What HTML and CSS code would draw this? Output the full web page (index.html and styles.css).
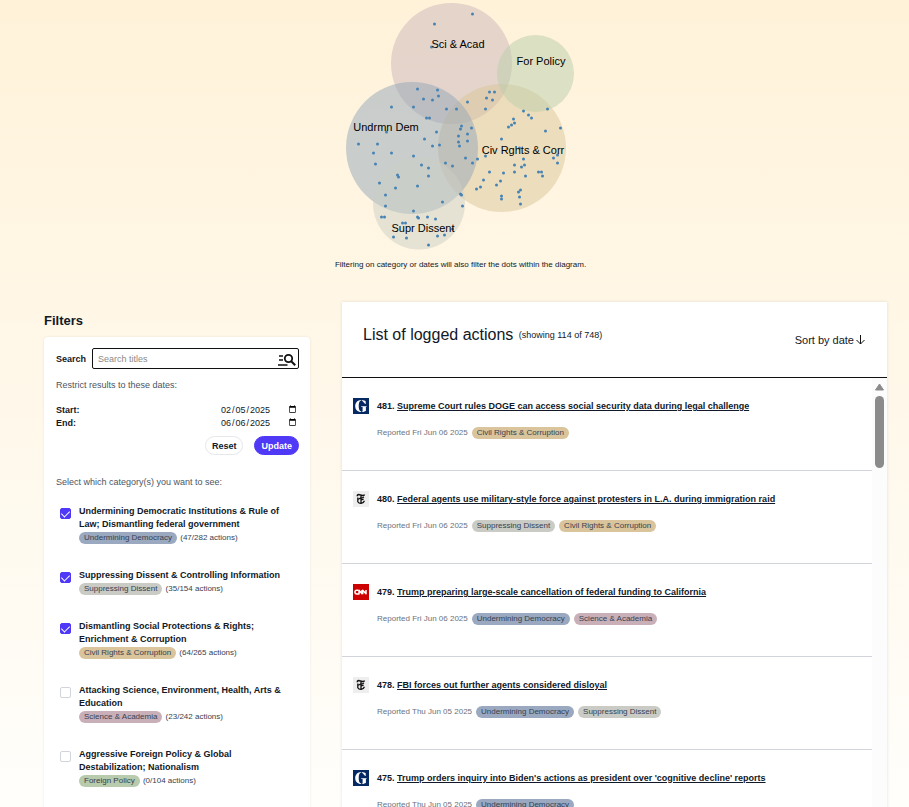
FILE: index.html
```html
<!DOCTYPE html>
<html lang="en">
<head>
    <meta charset="UTF-8">
    <meta name="viewport" content="width=device-width, initial-scale=1.0">
    <title>List of logged actions</title>
    <link rel="stylesheet" href="styles.css">
</head>
<body>
    <figure class="diagram">
        <svg id="venn" width="240" height="254" viewBox="341 0 240 254" role="img" aria-label="Actions by category">
            <circle class="sci" cx="451.5" cy="63.5" r="60.5"/>
            <circle class="civ" cx="502" cy="148" r="64"/>
            <circle class="foreign" cx="535.5" cy="73.5" r="38.5"/>
            <circle class="und" cx="412" cy="148" r="66"/>
            <circle class="supr" cx="419" cy="203.5" r="46"/>
            <g id="dots"></g>
            <text x="458" y="48">Sci &amp; Acad</text>
            <text x="541" y="65">For Policy</text>
            <text x="386" y="131">Undrmn Dem</text>
            <text x="523" y="154">Civ Rghts &amp; Corr</text>
            <text x="423" y="232">Supr Dissent</text>
        </svg>
        <figcaption>Filtering on category or dates will also filter the dots within the diagram.</figcaption>
    </figure>

    <!-- publisher icons -->
    <svg width="0" height="0" class="sprite">
        <symbol id="guardian" viewBox="0 0 16 16">
            <rect width="16" height="16" fill="#052962"/>
            <path fill="#fff" d="M8.300 1.900C4.500 2 2.200 4.500 2.200 8s2.200 6 6.100 6.100v-.5C6.500 13.200 5.700 11.500 5.700 8s.8-5.300 2.600-5.600zM9 1.900c1.700.1 2.900.7 3.700 1.300v2.700h-.5L9 2.400zM8 8.300h5.700v.4l-.8.4v3.700c-.8.6-2.300 1.200-3.700 1.300v-.5l.4-.3V9.100L8 8.700z"/>
        </symbol>
        <symbol id="nyt" viewBox="0 0 16 16">
            <rect width="16" height="16" fill="#eee"/>
            <path fill="none" stroke="#111" stroke-width="1.600" d="M4.300 5.200C4.300 3.500 5.500 3.400 6.500 3.700l3 .8c1 .2 1.700-.1 1.800-1"/>
            <path fill="none" stroke="#111" stroke-width="1.300" d="M4.800 6.500v4.200c.8 1.400 2 1.700 3.400 1.600 1.600-.1 2.700-1 3.200-2.500M8 4.500v7.500M4.800 8.500L8 6.800M8 7.500l3-1.500M8 9.200l2.700-1.200"/>
        </symbol>
        <symbol id="cnn" viewBox="0 0 16 16">
            <rect width="16" height="16" fill="#c00"/>
            <path fill="none" stroke="#fff" stroke-width="1.500" stroke-linejoin="round" d="M5.200 6.300H3.800C1.300 6.300 1.300 9.900 3.800 9.900H6V6.300l3 3.500V6M9.700 10.200V6.300l3.300 3.500V6"/>
        </symbol>
    </svg>

    <main class="page">
        <section class="filters">
            <h2>Filters</h2>
            <form class="card">
                <div class="search">
                    <label for="search">Search</label>
                    <div class="search-box">
                        <input type="text" id="search" placeholder="Search titles">
                        <svg width="18" height="14" viewBox="0 0 18 14" fill="none" stroke="#111" stroke-width="1.500">
                            <path d="M1 4h4M1 8h4M0 13h9.500"/>
                            <circle cx="10.500" cy="6.500" r="3.700" stroke-width="1.800"/>
                            <path stroke-width="2" d="M13.200 9.200l4 4"/>
                        </svg>
                    </div>
                </div>
                <p class="hint">Restrict results to these dates:</p>
                <div class="date"><label for="start">Start:</label><input type="date" id="start" value="2025-02-05"></div>
                <div class="date"><label for="end">End:</label><input type="date" id="end" value="2025-06-06"></div>
                <div class="buttons">
                    <button type="reset">Reset</button>
                    <button type="button" class="update">Update</button>
                </div>
                <p class="hint select">Select which category(s) you want to see:</p>
                <ul class="categories">
                    <li>
                        <input type="checkbox" id="cat1" checked>
                        <label for="cat1"><b>Undermining Democratic Institutions &amp; Rule of Law; Dismantling federal government</b>
                        <span class="count"><span class="tag und">Undermining Democracy</span> (47/282 actions)</span></label>
                    </li>
                    <li>
                        <input type="checkbox" id="cat2" checked>
                        <label for="cat2"><b>Suppressing Dissent &amp; Controlling Information</b>
                        <span class="count"><span class="tag supr">Suppressing Dissent</span> (35/154 actions)</span></label>
                    </li>
                    <li>
                        <input type="checkbox" id="cat3" checked>
                        <label for="cat3"><b>Dismantling Social Protections &amp; Rights; Enrichment &amp; Corruption</b>
                        <span class="count"><span class="tag civ">Civil Rights &amp; Corruption</span> (64/265 actions)</span></label>
                    </li>
                    <li>
                        <input type="checkbox" id="cat4">
                        <label for="cat4"><b>Attacking Science, Environment, Health, Arts &amp; Education</b>
                        <span class="count"><span class="tag sci">Science &amp; Academia</span> (23/242 actions)</span></label>
                    </li>
                    <li>
                        <input type="checkbox" id="cat5">
                        <label for="cat5"><b>Aggressive Foreign Policy &amp; Global Destabilization; Nationalism</b>
                        <span class="count"><span class="tag foreign">Foreign Policy</span> (0/104 actions)</span></label>
                    </li>
                </ul>
            </form>
        </section>

        <section class="list">
            <header>
                <h1>List of logged actions <small>(showing 114 of 748)</small></h1>
                <button type="button" class="sort">Sort by date
                    <svg width="9" height="10" viewBox="0 0 9 10" fill="none" stroke="#111"><path d="M4.500 0v9M.5 5l4 4 4-4"/></svg>
                </button>
            </header>
            <div class="scroller">
                <ul class="actions">
                    <li>
                        <svg class="icon"><use href="#guardian"/></svg>
                        <div>
                            <h3>481. <a href="#">Supreme Court rules DOGE can access social security data during legal challenge</a></h3>
                            <p><span>Reported Fri Jun 06 2025</span><span class="tag civ">Civil Rights &amp; Corruption</span></p>
                        </div>
                    </li>
                    <li>
                        <svg class="icon"><use href="#nyt"/></svg>
                        <div>
                            <h3>480. <a href="#">Federal agents use military-style force against protesters in L.A. during immigration raid</a></h3>
                            <p><span>Reported Fri Jun 06 2025</span><span class="tag supr">Suppressing Dissent</span><span class="tag civ">Civil Rights &amp; Corruption</span></p>
                        </div>
                    </li>
                    <li>
                        <svg class="icon"><use href="#cnn"/></svg>
                        <div>
                            <h3>479. <a href="#">Trump preparing large-scale cancellation of federal funding to California</a></h3>
                            <p><span>Reported Fri Jun 06 2025</span><span class="tag und">Undermining Democracy</span><span class="tag sci">Science &amp; Academia</span></p>
                        </div>
                    </li>
                    <li>
                        <svg class="icon"><use href="#nyt"/></svg>
                        <div>
                            <h3>478. <a href="#">FBI forces out further agents considered disloyal</a></h3>
                            <p><span>Reported Thu Jun 05 2025</span><span class="tag und">Undermining Democracy</span><span class="tag supr">Suppressing Dissent</span></p>
                        </div>
                    </li>
                    <li>
                        <svg class="icon"><use href="#guardian"/></svg>
                        <div>
                            <h3>475. <a href="#">Trump orders inquiry into Biden's actions as president over 'cognitive decline' reports</a></h3>
                            <p><span>Reported Thu Jun 05 2025</span><span class="tag und">Undermining Democracy</span></p>
                        </div>
                    </li>
                </ul>
                <div class="rail">
                    <svg width="9" height="8" viewBox="0 0 9 8"><path fill="#8b8b8b" stroke="#8b8b8b" stroke-linejoin="round" d="M4.500 1L8.500 7h-8z"/></svg>
                    <div class="thumb"></div>
                </div>
            </div>
        </section>
    </main>
    <script>
        const dots = [
            [434,24],[472,14],[431,47],[417,89],[423,99],[437,90],[438,96],[432,100],[413,107],[391,107],
            [446,109],[456,109],[426,118],[429,118],[467,102],[489,92],[494,92],[486,98],[492,100],[485,109],
            [523,111],[528,115],[531,118],[547,109],[513,119],[514,123],[511,125],[508,127],[386,132],[358,144],
            [377,144],[424,139],[436,132],[432,146],[439,145],[373,153],[391,153],[413,156],[375,164],[421,165],
            [428,168],[428,176],[445,163],[452,166],[461,126],[460,129],[467,134],[458,136],[467,141],[458,142],
            [459,146],[465,158],[397,175],[398,177],[379,183],[395,188],[417,186],[385,195],[385,206],[442,202],
            [460,194],[461,195],[462,206],[413,211],[381,217],[384,217],[417,217],[418,218],[427,217],[435,219],
            [402,223],[405,223],[393,237],[406,238],[437,236],[444,235],[452,229],[428,245],[471,128],[545,131],
            [560,128],[501,139],[519,148],[557,155],[553,158],[557,163],[485,156],[477,159],[472,163],[523,159],
            [514,165],[524,165],[521,167],[489,172],[503,173],[514,172],[525,176],[538,172],[541,172],[542,176],
            [483,180],[500,181],[496,185],[476,189],[480,187],[520,190],[518,192],[519,197],[501,196],[501,199],
            [520,204]
        ];
        const group = document.getElementById("dots");
        dots.forEach(([x, y]) => {
            const dot = document.createElementNS("http://www.w3.org/2000/svg", "circle");
            dot.setAttribute("cx", x + 0.5);
            dot.setAttribute("cy", y);
            dot.setAttribute("r", 1.5);
            group.appendChild(dot);
        });
    </script>
</body>
</html>
```
FILE: styles.css
```css
* {
    box-sizing: border-box;
}
body {
    margin: 0;
    min-height: 100vh;
    font-family: "Liberation Sans", Arial, sans-serif;
    font-size: 9px;
    color: #111827;
    background: linear-gradient(#fff2d9, #fffefb) fixed;
}
h1, h2, h3, p, ul, figure {
    margin: 0;
    padding: 0;
}
ul {
    list-style: none;
}
button, input {
    font-family: inherit;
    color: inherit;
    margin: 0;
}
button {
    cursor: pointer;
}

/* diagram */
.diagram {
    display: flex;
    flex-direction: column;
    align-items: center;
    padding-left: 12px;
}
figcaption {
    margin-top: 5px;
    font-size: 8px;
    line-height: 11px;
}
#venn > circle {
    opacity: 0.5;
}
#venn .und { fill: #93a6b8; }
#venn .supr { fill: #cbd0c6; }
#venn .civ { fill: #d9c699; }
#venn .sci { fill: #c9b6b9; }
#venn .foreign { fill: #b9ceab; }
#dots {
    fill: #4682b4;
}
#venn text {
    font-size: 11px;
    text-anchor: middle;
    fill: #000;
}
.sprite {
    display: block;
}

.page {
    display: flex;
    align-items: flex-start;
    gap: 32px;
    padding: 32px 22px 0 44px;
}
.tag {
    display: inline-block;
    padding: 0 5px;
    border-radius: 8px;
    font-size: 8px;
    line-height: 12px;
    color: #374151;
    white-space: nowrap;
}
.tag.und { background: #9aa9bf; }
.tag.supr { background: #c9cbc4; }
.tag.civ { background: #d9c49b; }
.tag.sci { background: #c9b0b8; }
.tag.foreign { background: #b8cbac; }

/* filters */
.filters {
    flex: 0 0 266px;
}
.filters h2 {
    margin-top: 11px;
    font-size: 13px;
    line-height: 16px;
}
.card {
    margin-top: 8px;
    padding: 11px 11px 24px 12px;
    background: #fff;
    border-radius: 4px;
    box-shadow: 0 0 3px rgba(0, 0, 0, 0.08);
}
.search {
    display: flex;
    align-items: center;
    gap: 6px;
    font-weight: bold;
}
.search-box {
    flex: 1;
    display: flex;
    align-items: center;
    height: 21px;
    padding: 0 2px 0 5px;
    border: 1px solid #111;
    border-radius: 2px;
}
.search-box input {
    flex: 1;
    min-width: 0;
    padding: 0;
    border: none;
    outline: none;
    font-size: 9px;
}
.search-box input::placeholder {
    color: #8a8a8a;
}
.hint {
    margin: 10px 0 11px;
    line-height: 13px;
    color: #4b5563;
}
.date {
    display: flex;
    justify-content: space-between;
    align-items: center;
    height: 13px;
    font-weight: bold;
}
.date input {
    width: 79px;
    height: 13px;
    padding: 0;
    border: none;
    background: none;
    font-size: 9px;
}
.buttons {
    display: flex;
    justify-content: flex-end;
    gap: 11px;
    margin-top: 7px;
}
.buttons button {
    height: 19px;
    padding: 0 6px;
    border: 1px solid #e5e7eb;
    border-radius: 10px;
    background: #fff;
    font-size: 9px;
    font-weight: bold;
}
.buttons .update {
    border-color: #4f39f6;
    background: #4f39f6;
    color: #fff;
}
.hint.select {
    margin: 21px 0 16px;
}
.categories li {
    display: flex;
    gap: 8px;
    padding-left: 4px;
    margin-bottom: 25px;
}
.categories input {
    appearance: none;
    flex: none;
    display: grid;
    place-items: center;
    width: 11px;
    height: 11px;
    margin-top: 3px;
    border: 1px solid #d1d5db;
    border-radius: 2px;
    background: #fff;
}
.categories input:checked {
    border-color: #4f39f6;
    background: #4f39f6;
}
.categories input:checked::before {
    content: "";
    width: 4px;
    height: 7px;
    margin-bottom: 2px;
    border: solid #fff;
    border-width: 0 1px 1px 0;
    transform: rotate(45deg);
}
.categories b, .count {
    display: block;
    line-height: 13px;
}
.count {
    height: 13px;
    font-size: 8px;
    color: #374151;
}
.count .tag {
    margin-right: 1px;
}

/* list */
.list {
    flex: 1;
    min-width: 0;
    background: #fff;
    box-shadow: 0 0 3px rgba(0, 0, 0, 0.12);
}
.list header {
    display: flex;
    justify-content: space-between;
    align-items: center;
    height: 76px;
    padding: 0 22px 0 21px;
    border-bottom: 1px solid #111;
}
.list h1 {
    padding-bottom: 10px;
    font-size: 16px;
    line-height: 20px;
    font-weight: normal;
}
.list h1 small {
    margin-left: 1px;
    font-size: 9px;
    vertical-align: 2px;
}
.sort {
    display: flex;
    align-items: center;
    gap: 2px;
    padding: 0;
    border: none;
    background: none;
    font-size: 11px;
}
.scroller {
    display: flex;
}
.actions {
    flex: 1;
    min-width: 0;
}
.actions li {
    display: flex;
    gap: 8px;
    height: 93px;
    padding: 20px 0 0 11px;
    border-bottom: 1px solid #d1d5db;
}
.icon {
    flex: none;
    width: 16px;
    height: 16px;
}
.actions h3 {
    font-size: 9px;
    line-height: 16px;
}
.actions a {
    color: inherit;
}
.actions p {
    display: flex;
    align-items: center;
    gap: 4px;
    margin-top: 12px;
    font-size: 8px;
    line-height: 13px;
    color: #6b7280;
}
.rail {
    display: flex;
    flex-direction: column;
    align-items: center;
    flex: 0 0 15px;
    padding-top: 5px;
    background: #fcfcfc;
}
.thumb {
    width: 9px;
    height: 72px;
    margin-top: 5px;
    border-radius: 5px;
    background: #8b8b8b;
}
```
